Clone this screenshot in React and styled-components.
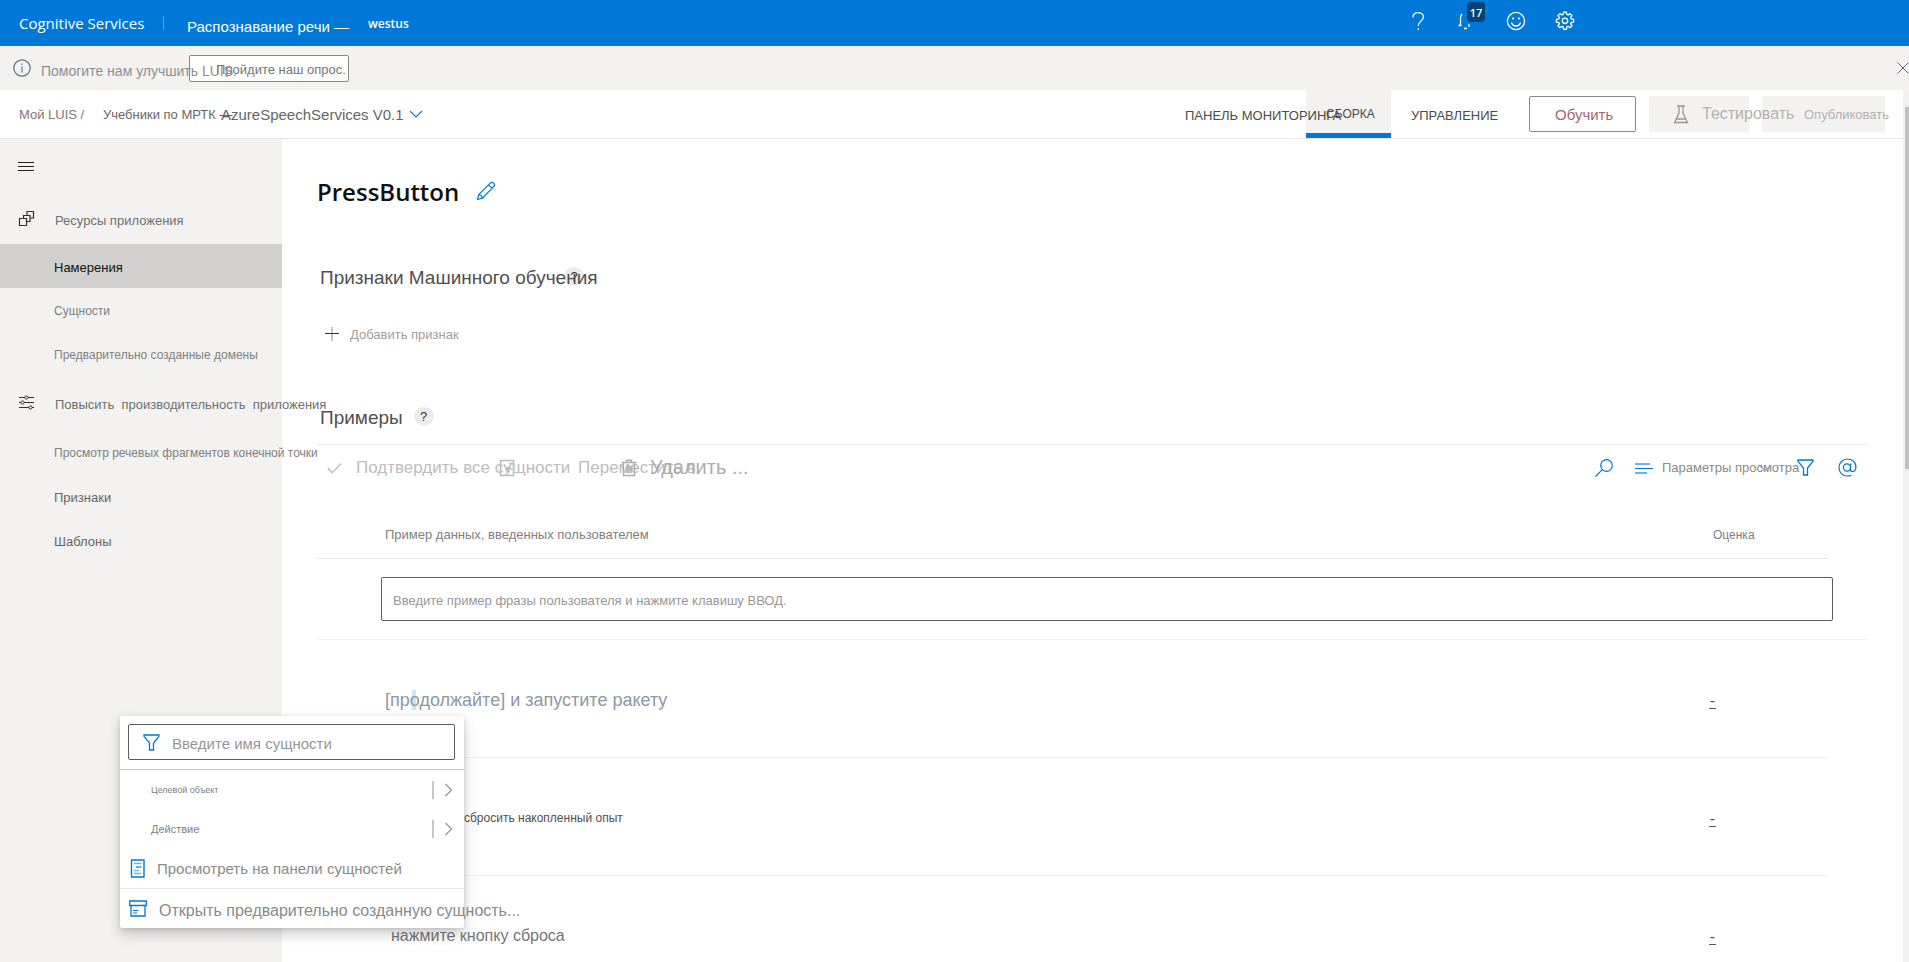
import { useState } from 'react';
import styled, { createGlobalStyle } from 'styled-components';

const GlobalStyle = createGlobalStyle`
  * {
    box-sizing: border-box;
  }

  body {
    margin: 0;
    background-color: #fff;
    font-family: 'Liberation Sans', Arial, sans-serif;
    font-size: 13px;
    color: #5c5c5c;
    overflow: hidden;
  }

  button {
    font-family: inherit;
    border: none;
    background: none;
    padding: 0;
    cursor: pointer;
  }

  a {
    color: inherit;
    text-decoration: none;
  }
`;

const Page = styled.div`
  position: relative;
  height: 100vh;
  display: flex;
  flex-direction: column;
  overflow: hidden;
  white-space: pre;
`;

/* ---------- header ---------- */

const Header = styled.header`
  flex: none;
  display: flex;
  align-items: center;
  height: 46px;
  padding: 0 334px 0 19px;
  background-color: #0078d7;
  color: #fff;
`;

const Brand = styled.a`
  width: 144px;
  font-family: 'Open Sans', 'Noto Sans', sans-serif;
  font-size: 15px;
`;

const Divider = styled.span`
  width: 1px;
  height: 14px;
  margin-right: 23px;
  background-color: #8f8fc4;
`;

const Resource = styled.span`
  width: 181px;
  padding-top: 6px;
  font-size: 15px;
`;

const Region = styled.span`
  flex: 1;
  font-family: 'Open Sans', 'Noto Sans', sans-serif;
  font-size: 12px;
  font-weight: 600;
`;

const HeaderIcons = styled.div`
  display: flex;
  align-items: center;
  gap: 29px;
  padding-bottom: 4px;
`;

const HeaderButton = styled.button`
  position: relative;
  display: flex;
  width: 20px;
  height: 20px;
  color: #fff;
`;

const Count = styled.span`
  position: absolute;
  top: -9px;
  left: 10px;
  width: 18px;
  height: 20px;
  border-radius: 4px;
  background-color: #004578;
  font-family: 'Open Sans', 'Noto Sans', sans-serif;
  font-size: 11px;
  font-weight: 600;
  line-height: 22px;
  text-align: center;
`;

/* ---------- survey banner ---------- */

const Banner = styled.div`
  flex: none;
  display: flex;
  align-items: center;
  height: 44px;
  padding-left: 12px;
  background-color: #f3f2f1;
`;

const BannerText = styled.span`
  z-index: 1;
  width: 148px;
  margin-left: 9px;
  padding-top: 6px;
  font-size: 14px;
  color: #8f8f8f;
`;

const SurveyButton = styled.button`
  width: 160px;
  height: 27px;
  padding: 3px 0 0 26px;
  border: 1px solid #8a8886;
  border-radius: 2px;
  background-color: #fff;
  font-size: 13px;
  text-align: left;
  color: #757575;
`;

const CloseButton = styled.button`
  display: flex;
  margin-left: auto;
  color: #6b5c78;
`;

/* ---------- body shell ---------- */

const Shell = styled.div`
  flex: 1;
  display: flex;
  min-height: 0;
`;

const Column = styled.div`
  flex: 1;
  display: flex;
  flex-direction: column;
  min-width: 0;
`;

const ScrollTrack = styled.div`
  width: 6px;
  padding: 17px 0 0 2px;
  background-color: #f1f1f1;
`;

const ScrollThumb = styled.div`
  height: 362px;
  background-color: #c1c1c1;
`;

const AppBar = styled.nav`
  flex: none;
  display: flex;
  align-items: center;
  height: 49px;
  padding: 0 18px 0 19px;
  border-bottom: 1px solid #e6e6e6;
`;

const Crumb = styled.a`
  width: ${({ $width }) => $width}px;
  font-size: 13px;
  color: ${({ $color }) => $color || '#666'};
`;

const VersionButton = styled.button`
  display: flex;
  align-items: center;
  gap: 5px;
  margin-right: auto;
  font-size: 15px;
  color: #666;
`;

const Tab = styled.a`
  display: flex;
  align-items: center;
  align-self: stretch;
  width: ${({ $width }) => $width}px;
  padding-left: ${({ $indent }) => $indent || 0}px;
  padding-top: ${({ $active }) => ($active ? 5 : 2)}px;
  border-bottom: ${({ $active }) => ($active ? '5px solid #0078d7' : 'none')};
  background-color: ${({ $active }) => ($active ? '#f3f2f1' : 'transparent')};
  font-size: ${({ $active }) => ($active ? 12 : 13)}px;
  color: #4a4a4a;
`;

/* the long tab label runs over its active neighbour */
const TabLabel = styled.span`
  z-index: 1;
`;

const ActionButton = styled.button`
  display: flex;
  align-items: center;
  gap: 13px;
  width: ${({ $width }) => $width}px;
  height: 36px;
  margin-left: 13px;
  padding-left: ${({ $indent }) => $indent}px;
  border-radius: 2px;
  background-color: #f3f2f1;
  font-size: ${({ $size }) => $size}px;
  color: #b3b1af;
`;

const TrainButton = styled(ActionButton)`
  border: 1px solid #8a8886;
  background-color: #fff;
  color: #a4666f;
`;

const ButtonLabel = styled.span`
  z-index: 1;
`;

const Content = styled.div`
  flex: 1;
  display: flex;
  min-height: 0;
`;

/* ---------- sidebar ---------- */

const Sidebar = styled.aside`
  z-index: 1;
  flex: none;
  width: 282px;
  background-color: #f3f2f1;
`;

const MenuButton = styled.button`
  display: flex;
  align-items: center;
  height: 53px;
  padding: 2px 0 0 18px;
  color: #222;
`;

const NavGroup = styled.div`
  display: flex;
  align-items: center;
  gap: 20px;
  height: 52px;
  padding-left: 18px;
  color: #6f6f6f;
`;

const NavGroupLabel = styled.span`
  padding-top: 4px;
`;

const NavList = styled.ul`
  margin: 0;
  padding: ${({ $top }) => $top || 0}px 0 0;
  list-style: none;
`;

const NavLink = styled.a`
  display: flex;
  align-items: center;
  height: 44px;
  padding: 2px 0 0 54px;
  background-color: ${({ $active }) => ($active ? '#d2d0ce' : 'transparent')};
  font-size: ${({ $active, $dark }) => ($active || $dark ? 13 : 12)}px;
  color: ${({ $active, $dark }) => ($active ? '#111' : $dark ? '#666' : '#808080')};
`;

/* ---------- intent page ---------- */

const Main = styled.main`
  flex: 1;
  min-width: 0;
  padding: 32px 35px 0;
`;

const TitleRow = styled.div`
  display: flex;
  align-items: center;
  gap: 17px;
  height: 40px;
`;

const Title = styled.h1`
  margin: 0;
  font-family: 'Open Sans', 'Noto Sans', sans-serif;
  font-size: 24px;
  font-weight: 600;
  color: #111;
`;

const IconButton = styled.button`
  display: flex;
  margin-left: ${({ $left }) => $left || 0}px;
  color: #0078d7;
`;

const SectionHead = styled.div`
  display: flex;
  align-items: center;
  gap: 11px;
  height: 28px;
  margin-top: ${({ $top }) => $top}px;
  padding-left: 3px;
`;

const SectionTitle = styled.h2`
  z-index: 1;
  width: ${({ $width }) => ($width ? `${$width}px` : 'auto')};
  margin: 0;
  font-size: 19px;
  font-weight: 400;
  color: #505050;
`;

const Help = styled.button`
  width: 20px;
  height: 19px;
  margin-bottom: 4px;
  border-radius: 50%;
  background-color: #edebe9;
  font-size: 13px;
  line-height: 19px;
  color: #333;
`;

const AddFeature = styled.button`
  display: flex;
  align-items: center;
  gap: 11px;
  height: 24px;
  margin-top: 30px;
  padding-left: 8px;
  font-size: 13px;
  color: #a0a0a0;
`;

const CommandBar = styled.div`
  display: flex;
  align-items: center;
  height: 48px;
  margin-top: 12px;
  padding: 0 11px 2px 10px;
  border-top: 1px solid #edebe9;
`;

const Command = styled.button`
  display: flex;
  align-items: center;
  gap: ${({ $gap }) => $gap || 14}px;
  width: ${({ $width }) => $width}px;
  font-size: ${({ $size }) => $size || 17}px;
  color: ${({ $color }) => $color || '#bdbdbd'};
`;

const ViewTools = styled.div`
  display: flex;
  align-items: center;
  margin-left: auto;
`;

const ViewOptions = styled.button`
  display: flex;
  align-items: center;
  gap: 9px;
  width: 163px;
  margin-left: 21px;
  font-size: 13px;
  color: #8a8a8a;
`;

const ViewLabel = styled.span`
  width: 87px;
`;

const Examples = styled.table`
  width: 100%;
  border-collapse: collapse;
  table-layout: fixed;
`;

const HeadCell = styled.th`
  width: ${({ $width }) => ($width ? `${$width}px` : 'auto')};
  height: 66px;
  padding: 20px 0 0 ${({ $indent }) => $indent || 0}px;
  border-bottom: ${({ $plain }) => ($plain ? 'none' : '1px solid #e6e6e6')};
  font-size: ${({ $size }) => $size || 13}px;
  font-weight: 400;
  text-align: left;
  color: #808080;
`;

const InputCell = styled.td`
  height: 81px;
  padding: 0 35px 0 64px;
  border-bottom: 1px solid #f3f2f1;
`;

const UtteranceInput = styled.input`
  display: block;
  width: 100%;
  height: 44px;
  padding: 3px 11px 0;
  border: 1px solid #5c5c5c;
  border-radius: 2px;
  font-family: inherit;
  font-size: 13px;

  &::placeholder {
    color: #979797;
  }
`;

const Cell = styled.td`
  height: 118px;
  padding: 4px 0 0 ${({ $indent }) => $indent || 0}px;
  border-bottom: ${({ $plain }) => ($plain ? 'none' : '1px solid #f0f0f0')};
  font-size: ${({ $size }) => $size || 12}px;
  color: ${({ $color }) => $color || '#505050'};
`;

const Mark = styled.mark`
  background: linear-gradient(90deg, transparent 2px, #cfe4f7 2px, #cfe4f7 6px, transparent 6px);
  color: inherit;
`;

const Score = styled.a`
  display: inline-block;
  width: 7px;
  height: 17px;
  border-bottom: 1px solid #5c5c5c;
  font-size: 16px;
  line-height: 17px;
  text-align: center;
`;

/* ---------- entity picker ---------- */

const Picker = styled.div`
  position: absolute;
  top: 716px;
  left: 120px;
  z-index: 2;
  width: 344px;
  background-color: #fff;
  border-radius: 2px;
  box-shadow: 0 6px 14px rgba(0, 0, 0, 0.2), 0 1px 4px rgba(0, 0, 0, 0.12);
`;

const PickerSearch = styled.label`
  display: flex;
  align-items: center;
  gap: 12px;
  height: 36px;
  margin: 8px 9px 9px 8px;
  padding-left: 14px;
  border: 1px solid #5c5c5c;
  border-radius: 2px;
  color: #0078d7;
`;

const PickerInput = styled.input`
  flex: 1;
  min-width: 0;
  border: none;
  outline: none;
  padding: 2px 0 0;
  font-family: inherit;
  font-size: 15px;

  &::placeholder {
    color: #979797;
  }
`;

const EntityRow = styled.button`
  display: flex;
  align-items: center;
  width: 100%;
  height: 39px;
  padding: 0 11px 0 31px;
  font-size: ${({ $size }) => $size}px;
  color: #808080;
`;

const EntityList = styled.div`
  border-top: 1px solid #c8c6c4;
`;

const Bar = styled.span`
  width: 2px;
  height: 18px;
  margin: 0 10px 0 auto;
  background-color: #c8c6c4;
`;

const PickerAction = styled.button`
  display: flex;
  align-items: center;
  gap: 12px;
  width: 100%;
  height: 40px;
  padding-left: 9px;
  border-top: ${({ $line }) => ($line ? '1px solid #e6e6e6' : 'none')};
  font-size: ${({ $size }) => $size}px;
  color: #8a8a8a;

  svg {
    color: #0078d7;
  }
`;

const PickerLabel = styled.span`
  padding-top: 4px;
`;

/* ---------- icons ---------- */

const IconSvg = styled.svg`
  flex: none;
`;

const Svg = ({ w = 16, h = 16, children }) => (
  <IconSvg
    width={w}
    height={h}
    viewBox={`0 0 ${w} ${h}`}
    fill="none"
    stroke="currentColor"
    aria-hidden="true"
  >
    {children}
  </IconSvg>
);

const QuestionIcon = () => (
  <Svg w={20} h={20}>
    <path d="M5 6.5C5 3 7 1.6 10 1.6S15.500 3.300 15.500 6c0 4-5.300 4.300-5.300 9" strokeWidth="1.3" />
    <path d="M9.500 18h1.500" strokeWidth="1.600" />
  </Svg>
);

/* the counter hides the right half of the bell */
const BellIcon = () => (
  <Svg w={20} h={20}>
    <path d="M1.500 14.500h3M3.500 14.500V8q0-3 1.500-5M7 17.500h3M12 13v3" strokeWidth="1.3" />
  </Svg>
);

const SmileIcon = () => (
  <Svg w={20} h={20}>
    <circle cx="10" cy="10" r="8.600" strokeWidth="1.300" />
    <path d="M5.500 11.500c.6 2.300 2.300 3.500 4.500 3.500s3.900-1.200 4.500-3.500" strokeWidth="1.300" />
    <circle cx="7" cy="7.500" r="1.100" fill="currentColor" stroke="none" />
    <circle cx="13" cy="7.500" r="1.100" fill="currentColor" stroke="none" />
  </Svg>
);

const GearIcon = () => (
  <Svg w={20} h={20}>
    <path
      d="M8.600 1.200h2.800l.4 2.300 1.200.5 2-1.400 2 2-1.400 2 .5 1.200 2.500.5v2.800l-2.500.4-.5 1.200 1.400 2-2 2-2-1.400-1.200.5-.4 2.500H8.600l-.4-2.500-1.200-.5-2 1.400-2-2 1.400-2-.5-1.200-2.500-.4V8.300l2.500-.5.5-1.200-1.400-2 2-2 2 1.400 1.200-.5z"
      strokeWidth="1.300"
      strokeLinejoin="round"
    />
    <circle cx="10" cy="9.800" r="2.700" strokeWidth="1.300" />
  </Svg>
);

const InfoIcon = () => (
  <Svg w={20} h={20}>
    <circle cx="10" cy="10" r="8.200" stroke="#5f7182" strokeWidth="1.200" />
    <path d="M10 8.500v6M10 5.500v1.500" stroke="#4a7fb5" strokeWidth="1.200" />
  </Svg>
);

const CloseIcon = () => (
  <Svg w={12} h={12}>
    <path d="M.5.5l11 11M11.500.5l-11 11" />
  </Svg>
);

const ChevronDown = ({ color = '#2b6cab' }) => (
  <Svg w={14} h={8}>
    <path d="M1 1l6 6 6-6" stroke={color} strokeWidth="1.200" />
  </Svg>
);

const ChevronRight = () => (
  <Svg w={9} h={14}>
    <path d="M1.500 1l6 6-6 6" stroke="#979797" strokeWidth="1.300" />
  </Svg>
);

const FlaskIcon = () => (
  <Svg w={16} h={19}>
    <path d="M4 1h8M6 1v7L1.500 17.500h13L10 8V1M3.500 14h9" stroke="#979797" strokeWidth="1.300" />
  </Svg>
);

const MenuIcon = () => (
  <Svg w={16} h={12}>
    <path d="M0 1.500h16M0 5.500h16M0 9.500h16" />
  </Svg>
);

const ResourcesIcon = () => (
  <Svg w={17} h={17}>
    <path d="M1.500 8.500h7v7h-7zM5.500 8V5.500h6.500v6H9M9 5V1.500h6.500v6.500H12.500" stroke="#333" strokeWidth="1.200" />
  </Svg>
);

const SlidersIcon = () => (
  <Svg w={17} h={17}>
    <path d="M1 3.500h6M10 3.500h6M1 8.500h2M6 8.500h10M1 13.500h10M14 13.500h2" stroke="#333" />
    <circle cx="8.500" cy="3.500" r="1.600" stroke="#333" />
    <circle cx="4.500" cy="8.500" r="1.600" stroke="#333" />
    <circle cx="12.500" cy="13.500" r="1.600" stroke="#333" />
  </Svg>
);

const PencilIcon = () => (
  <Svg w={20} h={20}>
    <path d="M1.500 18.500l1.300-5L14 2.300c1.300-1.300 2.600-1.100 3.600-.1s1.100 2.400-.1 3.600L6.300 17.200zM12.500 3.800l3.600 3.600M2.800 13.500c1.800.2 3.200 1.600 3.500 3.700" strokeWidth="1.200" />
  </Svg>
);

const PlusIcon = () => (
  <Svg w={14} h={14}>
    <path d="M7 0v14" stroke="#c8c6c4" strokeWidth="2" />
    <path d="M0 6.500h14" stroke="#333" />
  </Svg>
);

const CheckIcon = () => (
  <Svg w={15} h={12}>
    <path d="M.8 6l4.500 4.700L14.200 1.500" strokeWidth="1.500" />
  </Svg>
);

const MoveIcon = () => (
  <Svg w={16} h={18}>
    <path d="M14.500 7V1.500h-13v15h13V13" strokeWidth="1.600" />
    <path d="M14 10H8M10.500 7L7.500 10l3 3.500M10 4.500h4" strokeWidth="1.600" />
  </Svg>
);

const TrashIcon = () => (
  <Svg w={16} h={18}>
    <path d="M.5 3.500h15M5.500 3V1.200h5V3M2.500 4v12.500h11V4M6 6.500v7.500M8 6.500v7.500M10 6.500v7.500" strokeWidth="1.500" />
  </Svg>
);

const SearchIcon = () => (
  <Svg w={18} h={18}>
    <circle cx="11.500" cy="6.500" r="5.800" strokeWidth="1.200" />
    <path d="M7.300 10.700L.5 17.500" strokeWidth="1.200" />
  </Svg>
);

const LinesIcon = () => (
  <Svg w={19} h={12}>
    <path d="M1 2h15M1 11h12" stroke="#6db3ea" strokeWidth="2" />
    <path d="M1 6.500h18" stroke="#0078d7" />
  </Svg>
);

const FunnelIcon = () => (
  <Svg w={17} h={17}>
    <path d="M1 1h15v1.300L10.500 9v7h-4V9L1 2.300z" strokeWidth="1.300" />
  </Svg>
);

const AtIcon = () => (
  <Svg w={19} h={19}>
    <circle cx="9" cy="9.500" r="3.600" strokeWidth="1.200" />
    <path d="M12.800 5.500l-.4 6c0 1.600.9 2 2 2 2 0 3.500-1.500 3.500-4.500 0-4.700-3.700-8-8.400-8S1 4.700 1 9.500 4.500 18 9.300 18c1.800 0 3-.3 4.200-.8" strokeWidth="1.200" />
  </Svg>
);

const PanelIcon = () => (
  <Svg w={16} h={19}>
    <path d="M2.500 1h12.500v17H2.500z" strokeWidth="1.400" />
    <path d="M5 4.500h7.500M5 11.500h5M5 14.500h7.500" stroke="#6db3ea" strokeWidth="1.600" />
    <path d="M7 8h5.500" strokeWidth="1.200" />
  </Svg>
);

const ArchiveIcon = () => (
  <Svg w={18} h={17}>
    <path d="M.7 1h16.600v4.500H.7zM2 5.500V16h14V5.500" strokeWidth="1.300" />
    <path d="M4 10.500h5.500M4 13h4" strokeWidth="1.100" />
  </Svg>
);

const resources = [
  { label: 'Намерения', active: true },
  { label: 'Сущности' },
  { label: 'Предварительно созданные домены' },
];

const performance = [
  { label: 'Просмотр речевых фрагментов конечной точки' },
  { label: 'Признаки', dark: true },
  { label: 'Шаблоны', dark: true },
];

const App = () => {
  const [utterance, setUtterance] = useState('');
  const [entity, setEntity] = useState('');

  return (
    <Page>
      <GlobalStyle />
      <Header>
        <Brand href="#">Cognitive Services</Brand>
        <Divider />
        <Resource>Распознавание речи —</Resource>
        <Region>westus</Region>
        <HeaderIcons>
          <HeaderButton aria-label="Справка"><QuestionIcon /></HeaderButton>
          <HeaderButton aria-label="Уведомления">
            <BellIcon />
            <Count>17</Count>
          </HeaderButton>
          <HeaderButton aria-label="Отзыв"><SmileIcon /></HeaderButton>
          <HeaderButton aria-label="Параметры"><GearIcon /></HeaderButton>
        </HeaderIcons>
      </Header>

      <Banner>
        <InfoIcon />
        <BannerText>Помогите нам улучшить LUIS.</BannerText>
        <SurveyButton>Пройдите наш опрос.</SurveyButton>
        <CloseButton aria-label="Закрыть"><CloseIcon /></CloseButton>
      </Banner>

      <Shell>
        <Column>
          <AppBar>
            <Crumb href="#" $width={84} $color="#83757a">Мой LUIS /</Crumb>
            <Crumb href="#" $width={118}>Учебники по МРТК —</Crumb>
            <VersionButton>
              AzureSpeechServices V0.1
              <ChevronDown />
            </VersionButton>
            <Tab href="#" $width={121}><TabLabel>ПАНЕЛЬ МОНИТОРИНГА</TabLabel></Tab>
            <Tab href="#" $width={85} $indent={20} $active>СБОРКА</Tab>
            <Tab href="#" $width={125} $indent={20}>УПРАВЛЕНИЕ</Tab>
            <TrainButton $width={107} $indent={25} $size={15}>Обучить</TrainButton>
            <ActionButton $width={100} $indent={24} $size={16} disabled>
              <FlaskIcon />
              <ButtonLabel>Тестировать</ButtonLabel>
            </ActionButton>
            <ActionButton $width={123} $indent={42} $size={13} disabled>Опубликовать</ActionButton>
          </AppBar>

          <Content>
            <Sidebar>
              <MenuButton aria-label="Меню"><MenuIcon /></MenuButton>
              <NavGroup>
                <ResourcesIcon />
                <NavGroupLabel>Ресурсы приложения</NavGroupLabel>
              </NavGroup>
              <NavList>
                {resources.map((item) => (
                  <li key={item.label}>
                    <NavLink href="#" $active={item.active}>{item.label}</NavLink>
                  </li>
                ))}
              </NavList>
              <NavGroup>
                <SlidersIcon />
                <NavGroupLabel>{'Повысить  производительность  приложения'}</NavGroupLabel>
              </NavGroup>
              <NavList $top={2}>
                {performance.map((item) => (
                  <li key={item.label}>
                    <NavLink href="#" $dark={item.dark}>{item.label}</NavLink>
                  </li>
                ))}
              </NavList>
            </Sidebar>

            <Main>
              <TitleRow>
                <Title>PressButton</Title>
                <IconButton aria-label="Переименовать"><PencilIcon /></IconButton>
              </TitleRow>

              <SectionHead $top={53}>
                <SectionTitle $width={233}>Признаки Машинного обучения</SectionTitle>
                <Help>?</Help>
              </SectionHead>
              <AddFeature>
                <PlusIcon />
                Добавить признак
              </AddFeature>

              <SectionHead $top={58}>
                <SectionTitle>Примеры</SectionTitle>
                <Help>?</Help>
              </SectionHead>
              <CommandBar>
                <Command $width={172} disabled>
                  <CheckIcon />
                  Подтвердить все сущности
                </Command>
                <Command $width={122} $gap={63} disabled>
                  <MoveIcon />
                  Переместить в
                </Command>
                <Command $width={130} $gap={13} $size={20} $color="#adadad" disabled>
                  <TrashIcon />
                  Удалить ...
                </Command>
                <ViewTools>
                  <IconButton aria-label="Поиск"><SearchIcon /></IconButton>
                  <ViewOptions>
                    <LinesIcon />
                    <ViewLabel>Параметры просмотра</ViewLabel>
                    <ChevronDown color="#a0a0a0" />
                  </ViewOptions>
                  <IconButton aria-label="Фильтр"><FunnelIcon /></IconButton>
                  <IconButton aria-label="Сущности" $left={24}><AtIcon /></IconButton>
                </ViewTools>
              </CommandBar>

              <Examples>
                <thead>
                  <tr>
                    <HeadCell $width={64} />
                    <HeadCell $indent={4}>Пример данных, введенных пользователем</HeadCell>
                    <HeadCell $width={119} $indent={4} $size={12}>Оценка</HeadCell>
                    <HeadCell $width={40} $plain />
                  </tr>
                </thead>
                <tbody>
                  <tr>
                    <InputCell colSpan={4}>
                      <UtteranceInput
                        aria-label="Пример фразы"
                        placeholder="Введите пример фразы пользователя и нажмите клавишу ВВОД."
                        value={utterance}
                        onChange={(e) => setUtterance(e.target.value)}
                      />
                    </InputCell>
                  </tr>
                  <tr>
                    <Cell />
                    <Cell $indent={4} $size={18} $color="#8d99a5">
                      [пр<Mark>о</Mark>должайте] и запустите ракету
                    </Cell>
                    <Cell><Score href="#">-</Score></Cell>
                    <Cell $plain />
                  </tr>
                  <tr>
                    <Cell />
                    <Cell $indent={83}>сбросить накопленный опыт</Cell>
                    <Cell><Score href="#">-</Score></Cell>
                    <Cell $plain />
                  </tr>
                  <tr>
                    <Cell />
                    <Cell $indent={10} $size={16} $color="#757575">нажмите кнопку сброса</Cell>
                    <Cell><Score href="#">-</Score></Cell>
                    <Cell $plain />
                  </tr>
                </tbody>
              </Examples>
            </Main>
          </Content>
        </Column>
        <ScrollTrack>
          <ScrollThumb />
        </ScrollTrack>
      </Shell>

      <Picker>
        <PickerSearch>
          <FunnelIcon />
          <PickerInput
            aria-label="Имя сущности"
            placeholder="Введите имя сущности"
            value={entity}
            onChange={(e) => setEntity(e.target.value)}
          />
        </PickerSearch>
        <EntityList>
          <EntityRow $size={9}>
            Целевой объект
            <Bar />
            <ChevronRight />
          </EntityRow>
          <EntityRow $size={11}>
            Действие
            <Bar />
            <ChevronRight />
          </EntityRow>
        </EntityList>
        <PickerAction $size={15}>
          <PanelIcon />
          Просмотреть на панели сущностей
        </PickerAction>
        <PickerAction $size={16} $line>
          <ArchiveIcon />
          <PickerLabel>Открыть предварительно созданную сущность...</PickerLabel>
        </PickerAction>
      </Picker>
    </Page>
  );
};

export default App;
